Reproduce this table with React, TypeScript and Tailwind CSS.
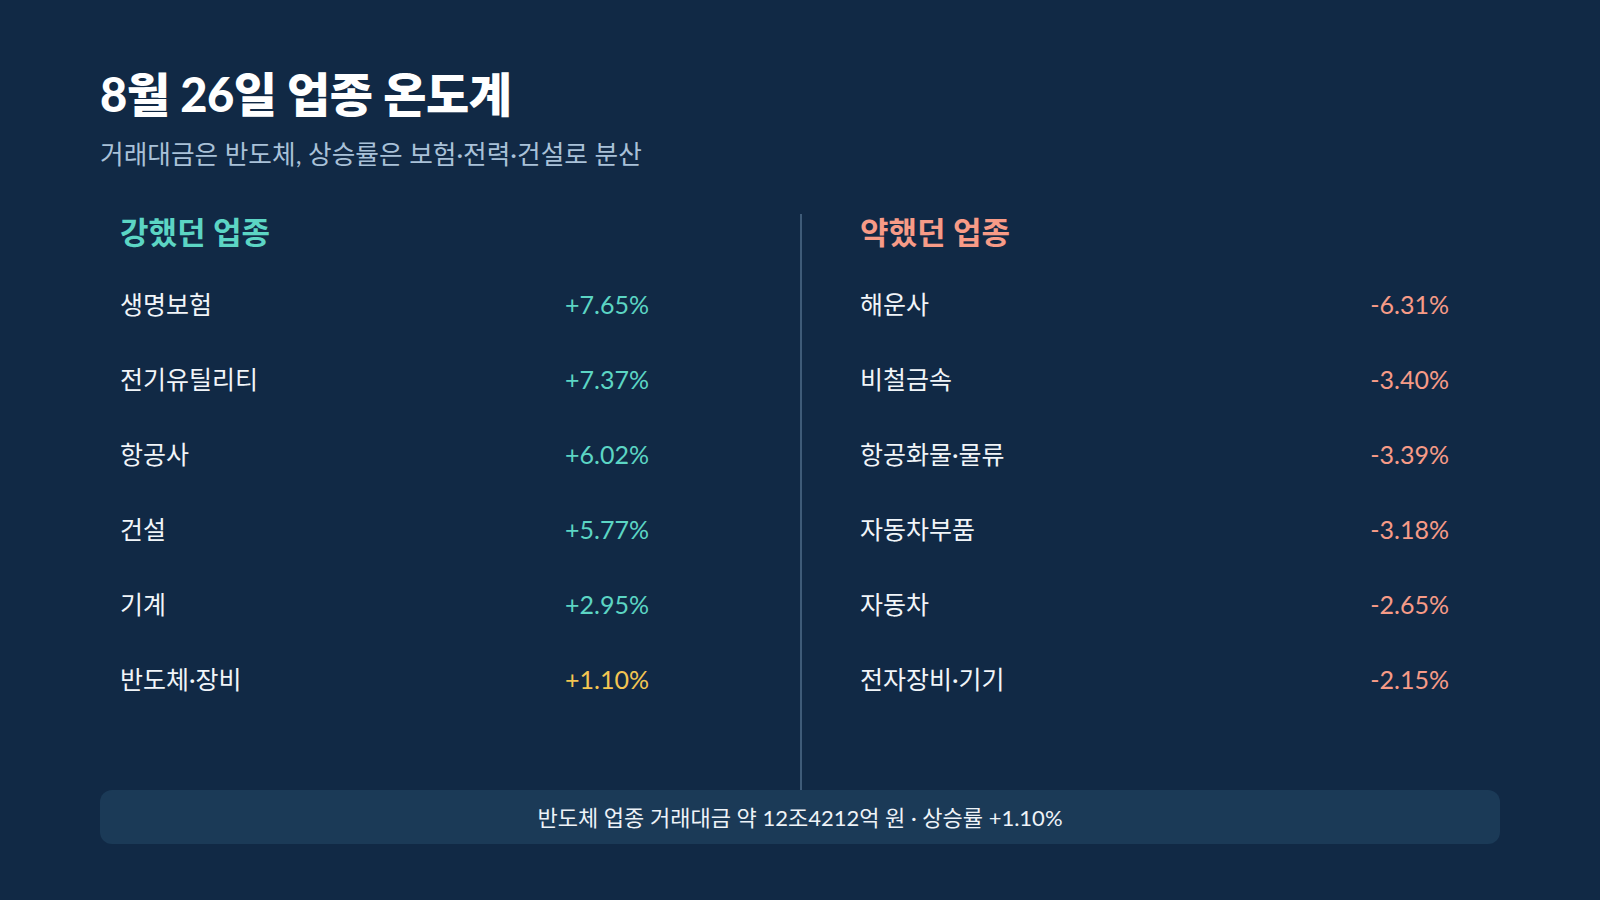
const strong = [
  { name: '생명보험', value: '+7.65%', tone: 'up' },
  { name: '전기유틸리티', value: '+7.37%', tone: 'up' },
  { name: '항공사', value: '+6.02%', tone: 'up' },
  { name: '건설', value: '+5.77%', tone: 'up' },
  { name: '기계', value: '+2.95%', tone: 'up' },
  { name: '반도체·장비', value: '+1.10%', tone: 'flat' },
];

const weak = [
  { name: '해운사', value: '-6.31%', tone: 'down' },
  { name: '비철금속', value: '-3.40%', tone: 'down' },
  { name: '항공화물·물류', value: '-3.39%', tone: 'down' },
  { name: '자동차부품', value: '-3.18%', tone: 'down' },
  { name: '자동차', value: '-2.65%', tone: 'down' },
  { name: '전자장비·기기', value: '-2.15%', tone: 'down' },
];

const toneClass: Record<string, string> = {
  up: 'text-[#5cd5c4]',
  flat: 'text-[#f3c552]',
  down: 'text-[#f79b87]',
};

const Row = ({ name, value, tone }: { name: string; value: string; tone: string }) => (
  <div className="flex h-[75px] items-center justify-between">
    <span className="text-[25px] text-[#f1f5f9]">{name}</span>
    <span className={`text-[25px] ${toneClass[tone]}`}>{value}</span>
  </div>
);

export default function App() {
  return (
    <div
      className="flex h-[900px] w-full flex-col bg-[#112945] px-[100px] pt-[68px] pb-[56px]"
      style={{ fontFamily: 'Lato, "Noto Sans CJK KR", sans-serif' }}
    >
      <h1 className="text-[47px] leading-[52px] font-black tracking-[-0.5px] text-white">8월 26일 업종 온도계</h1>
      <p className="mt-[18px] text-[25.7px] leading-[32px] text-[#a9c1d8]">거래대금은 반도체, 상승률은 보험·전력·건설로 분산</p>

      {/* two columns, divider runs down into the footer */}
      <div className="mt-[44px] grid flex-1 grid-cols-2">
        <div className="pl-5 pr-[151px]">
          <h2 className="text-[31px] leading-[36px] font-bold text-[#5cd5c4]">강했던 업종</h2>
          <div className="mt-[17px]">
            {strong.map((r) => (
              <Row key={r.name} {...r} />
            ))}
          </div>
        </div>
        <div className="border-l-2 border-[#3f5b78] pl-[58px] pr-[51px]">
          <h2 className="text-[31px] leading-[36px] font-bold text-[#f79b87]">약했던 업종</h2>
          <div className="mt-[17px]">
            {weak.map((r) => (
              <Row key={r.name} {...r} />
            ))}
          </div>
        </div>
      </div>

      <div className="flex h-[54px] items-center justify-center rounded-xl bg-[#1b3a57] text-[22px] text-[#eef3f8]">
        반도체 업종 거래대금 약 12조4212억 원 · 상승률 +1.10%
      </div>
    </div>
  );
}
